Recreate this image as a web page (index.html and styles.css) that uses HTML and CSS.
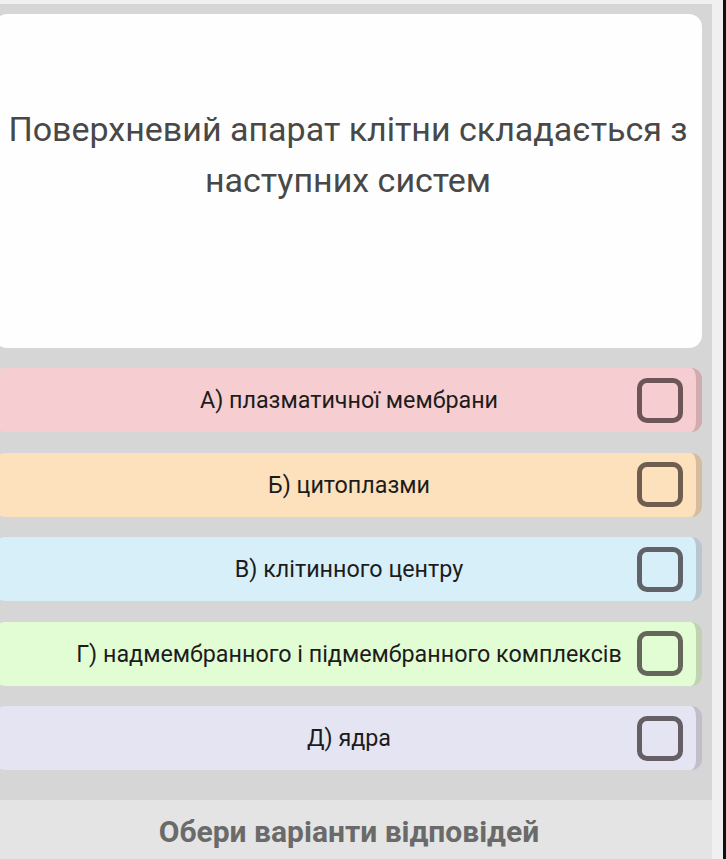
FILE: index.html
```html
<!DOCTYPE html>
<html lang="uk">
<head>
<meta charset="utf-8">
<link rel="stylesheet" href="styles.css">
</head>
<body>
<div class="frame">
  <main class="app">
    <section class="panel">
      <div class="inner">
        <div class="question">
          <p class="question-text">Поверхневий апарат клітни складається з наступних систем</p>
        </div>
        <ul class="options">
          <li class="option opt-a"><span class="label">А) плазматичної мембрани</span><span class="check"></span></li>
          <li class="option opt-b"><span class="label">Б) цитоплазми</span><span class="check"></span></li>
          <li class="option opt-c"><span class="label">В) клітинного центру</span><span class="check"></span></li>
          <li class="option opt-d"><span class="label">Г) надмембранного і підмембранного комплексів</span><span class="check"></span></li>
          <li class="option opt-e"><span class="label">Д) ядра</span><span class="check"></span></li>
        </ul>
      </div>
    </section>
    <footer class="footer">Обери варіанти відповідей</footer>
  </main>
  <div class="gutter"></div>
  <div class="edge"></div>
</div>
</body>
</html>
```

FILE: styles.css
```css
html, body {
  margin: 0;
  padding: 0;
  height: 100%;
  overflow: hidden;
}
body {
  background: #f0f0f0;
  font-family: Roboto, "Noto Sans", sans-serif;
}
.frame {
  display: flex;
  height: 859px;
}
.app {
  width: 712px;
  display: flex;
  flex-direction: column;
  padding-top: 4px;
  box-sizing: border-box;
}
.panel {
  background: #d6d6d6;
  padding: 10px 10px 30px 0;
  flex: 0 0 auto;
}
.inner {
  margin-left: -6px;
}
.question {
  background: #fefefe;
  border-radius: 13px;
  height: 334px;
  box-sizing: border-box;
  padding-top: 90px;
}
.question-text {
  margin: 0;
  text-align: center;
  font-size: 34px;
  line-height: 51px;
  color: #484848;
  padding: 0 4px;
}
.options {
  list-style: none;
  margin: 20px 0 0;
  padding: 0;
  display: flex;
  flex-direction: column;
  gap: 20.5px;
}
.option {
  height: 64px;
  border-radius: 11px;
  border-right: 6px solid rgba(60, 40, 40, 0.2);
  display: grid;
  grid-template-columns: 68px 1fr 60px;
  align-items: center;
}
.label {
  grid-column: 2;
  text-align: center;
  font-size: 23.3px;
  color: #1c1c1c;
  white-space: nowrap;
}
.check {
  grid-column: 3;
  justify-self: end;
  margin-right: 13px;
  width: 46px;
  height: 45px;
  box-sizing: border-box;
  border: 5px solid rgba(25, 12, 15, 0.62);
  border-radius: 10px;
}
.opt-a { background: #f6cdd0; }
.opt-b { background: #fde1bc; }
.opt-c { background: #d7eff9; }
.opt-d { background: #e2fdd4; }
.opt-e { background: #e4e4f2; }
.footer {
  flex: 1;
  background: #e4e4e4;
  text-align: center;
  font-weight: bold;
  font-size: 30px;
  color: #6a6a6a;
  padding: 14px 14px 0 0;
}
.gutter {
  width: 11px;
  background: #f0f0f0;
}
.edge {
  width: 3px;
  background: #111;
}
```
